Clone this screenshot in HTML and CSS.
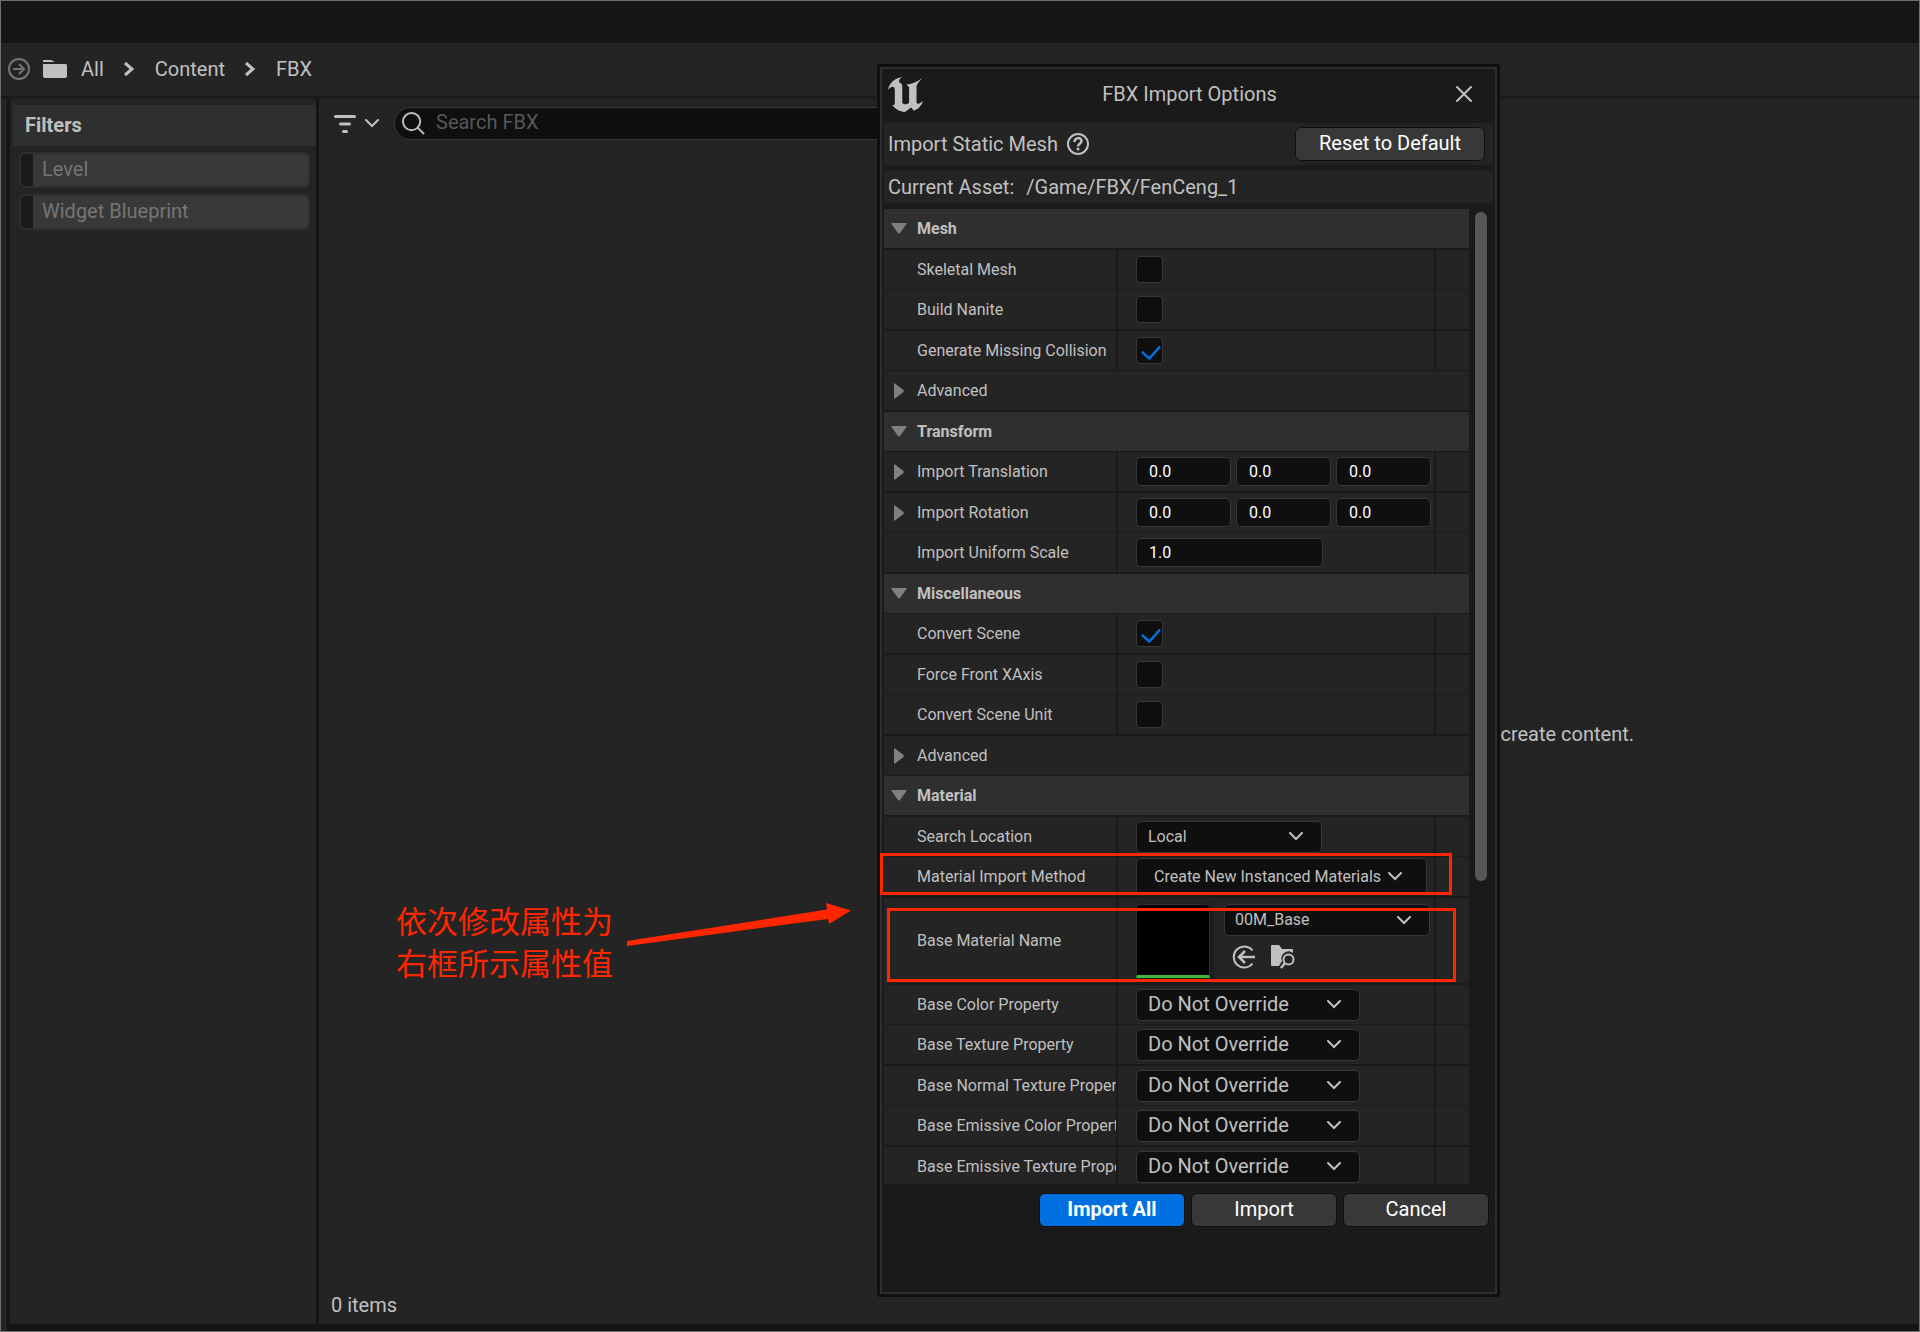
FILE: index.html
```html
<!DOCTYPE html>
<html lang="en">
<head>
    <meta charset="UTF-8">
    <meta name="viewport" content="width=device-width, initial-scale=1.0">
    <title>FBX Import Options</title>
    <link rel="stylesheet" href="styles.css">
</head>
<body>
    <svg class="symbols" aria-hidden="true">
        <symbol id="chevron" viewBox="0 0 14 9"><path d="M1 1l6 6 6-6" fill="none" stroke="currentColor" stroke-width="2" stroke-linecap="round"/></symbol>
        <symbol id="crumb" viewBox="0 0 10 16"><path d="M1 2l7 6-7 6" fill="none" stroke="currentColor" stroke-width="3"/></symbol>
        <symbol id="open" viewBox="0 0 16 11"><path d="M1 0h14q1 0 .5 1L9 10q-1 1-2 0L.5 1Q0 0 1 0z" fill="currentColor"/></symbol>
        <symbol id="closed" viewBox="0 0 10 16"><path d="M0 1q0-1 1-.5L9.500 7q.5 1 0 2L1 15.500Q0 16 0 15z" fill="currentColor"/></symbol>
    </svg>

    <div class="window">
        <div class="titlebar"></div>
        <nav class="breadcrumbs">
            <svg class="icon-forward" viewBox="0 0 22 22"><g fill="none" stroke="currentColor" stroke-width="2"><circle cx="11" cy="11" r="10"/><path d="M5 11h11M11 6l5 5-5 5"/></g></svg>
            <svg class="icon-folder" viewBox="0 0 24 18"><path d="M0 0h8l4 2H0zM0 4h23l1 1v11q0 2-2 2H2q-2 0-2-2z" fill="currentColor"/></svg>
            <a href="#">All</a>
            <svg class="icon-crumb"><use href="#crumb"/></svg>
            <a href="#">Content</a>
            <svg class="icon-crumb"><use href="#crumb"/></svg>
            <a href="#">FBX</a>
        </nav>

        <div class="browser">
            <aside class="filters">
                <h2>Filters</h2>
                <button class="filter">Level</button>
                <button class="filter">Widget Blueprint</button>
            </aside>
            <main class="assets">
                <div class="toolbar">
                    <button class="filter-menu" aria-label="Filter menu">
                        <svg class="icon-filter" viewBox="0 0 22 18"><path d="M1.500 1.500h19M6.500 9h9M9.500 16.500h3" stroke="currentColor" stroke-width="3" stroke-linecap="round"/></svg>
                        <svg class="icon-chevron"><use href="#chevron"/></svg>
                    </button>
                    <label class="search">
                        <svg class="icon-search" viewBox="0 0 24 24"><g fill="none" stroke="currentColor" stroke-width="2"><circle cx="10" cy="10" r="9"/><path d="M16 16l7 7"/></g></svg>
                        <input type="text" placeholder="Search FBX" aria-label="Search FBX">
                    </label>
                </div>
                <p class="hint">create content.</p>
                <p class="count">0 items</p>
            </main>
        </div>
    </div>

    <div class="dialog" role="dialog" aria-labelledby="dialogTitle">
        <header class="dialog-header">
            <svg class="logo" viewBox="0 0 103 103"><path fill="currentColor" d="M0 38C4 16 20 4 41 0C32 8 30 12 36 18C40 20 42 22 42 27V76C46 82 55 82 62 76V30L54 22C68 22 84 16 100 4C90 16 84 22 84 30V74C86 82 92 80 103 70C98 87 88 95 76 99L68 90L50 103C34 103 20 94 12 82C18 84 20 82 20 76V38C20 26 10 26 0 38Z"/></svg>
            <h1 id="dialogTitle">FBX Import Options</h1>
            <button class="close" aria-label="Close">
                <svg viewBox="0 0 16 16"><path d="M1 1l14 14M15 1L1 15" stroke="currentColor" stroke-width="2" stroke-linecap="round"/></svg>
            </button>
        </header>

        <div class="band band-type">
            <span>Import Static Mesh</span>
            <svg class="icon-help" viewBox="0 0 22 22"><g fill="none" stroke="currentColor" stroke-width="2"><circle cx="11" cy="11" r="10"/><path stroke-width="2.500" d="M7.500 9c0-5 7-5 7-1 0 3-3.500 2.500-3.500 5.500"/></g><circle cx="11" cy="16" r="1.500" fill="currentColor"/></svg>
            <button class="button button-reset">Reset to Default</button>
        </div>
        <div class="band band-asset">
            <span>Current Asset:</span>
            <span>/Game/FBX/FenCeng_1</span>
        </div>

        <div class="details">
            <div class="properties">
                <button class="group"><svg class="tri-open"><use href="#open"/></svg>Mesh</button>
                <div class="row">
                    <label for="skeletal">Skeletal Mesh</label>
                    <div class="value"><input type="checkbox" id="skeletal"></div>
                    <div class="reset"></div>
                </div>
                <div class="row">
                    <label for="nanite">Build Nanite</label>
                    <div class="value"><input type="checkbox" id="nanite"></div>
                    <div class="reset"></div>
                </div>
                <div class="row">
                    <label for="collision">Generate Missing Collision</label>
                    <div class="value"><input type="checkbox" id="collision" checked></div>
                    <div class="reset"></div>
                </div>
                <button class="group group-advanced"><svg class="tri-closed"><use href="#closed"/></svg>Advanced</button>

                <button class="group"><svg class="tri-open"><use href="#open"/></svg>Transform</button>
                <div class="row">
                    <label for="translation"><svg class="tri-closed"><use href="#closed"/></svg>Import Translation</label>
                    <div class="value">
                        <input type="text" class="number" id="translation" value="0.0">
                        <input type="text" class="number" aria-label="Import Translation Y" value="0.0">
                        <input type="text" class="number" aria-label="Import Translation Z" value="0.0">
                    </div>
                    <div class="reset"></div>
                </div>
                <div class="row">
                    <label for="rotation"><svg class="tri-closed"><use href="#closed"/></svg>Import Rotation</label>
                    <div class="value">
                        <input type="text" class="number" id="rotation" value="0.0">
                        <input type="text" class="number" aria-label="Import Rotation Y" value="0.0">
                        <input type="text" class="number" aria-label="Import Rotation Z" value="0.0">
                    </div>
                    <div class="reset"></div>
                </div>
                <div class="row">
                    <label for="scale">Import Uniform Scale</label>
                    <div class="value"><input type="text" class="number number-wide" id="scale" value="1.0"></div>
                    <div class="reset"></div>
                </div>

                <button class="group"><svg class="tri-open"><use href="#open"/></svg>Miscellaneous</button>
                <div class="row">
                    <label for="convert">Convert Scene</label>
                    <div class="value"><input type="checkbox" id="convert" checked></div>
                    <div class="reset"></div>
                </div>
                <div class="row">
                    <label for="xaxis">Force Front XAxis</label>
                    <div class="value"><input type="checkbox" id="xaxis"></div>
                    <div class="reset"></div>
                </div>
                <div class="row">
                    <label for="unit">Convert Scene Unit</label>
                    <div class="value"><input type="checkbox" id="unit"></div>
                    <div class="reset"></div>
                </div>
                <button class="group group-advanced"><svg class="tri-closed"><use href="#closed"/></svg>Advanced</button>

                <button class="group"><svg class="tri-open"><use href="#open"/></svg>Material</button>
                <div class="row">
                    <label for="location">Search Location</label>
                    <div class="value">
                        <div class="select select-location">
                            <select id="location"><option>Local</option></select>
                            <svg class="icon-chevron"><use href="#chevron"/></svg>
                        </div>
                    </div>
                    <div class="reset"></div>
                </div>
                <div class="row">
                    <label for="method">Material Import Method</label>
                    <div class="value">
                        <div class="select select-method">
                            <select id="method"><option>Create New Instanced Materials</option></select>
                            <svg class="icon-chevron"><use href="#chevron"/></svg>
                        </div>
                    </div>
                    <div class="reset"></div>
                </div>
                <div class="row row-material">
                    <label for="material">Base Material Name</label>
                    <div class="value">
                        <div class="thumbnail"></div>
                        <div class="asset">
                            <div class="select select-asset">
                                <select id="material"><option>00M_Base</option></select>
                                <svg class="icon-chevron"><use href="#chevron"/></svg>
                            </div>
                            <div class="asset-actions">
                                <button aria-label="Use selected asset">
                                    <svg viewBox="0 0 24 24"><g fill="none" stroke="currentColor" stroke-width="2"><path d="M20.500 5.500a10.500 10.500 0 1 0 0 13"/><path stroke-width="2.500" d="M23 12H7M13 6l-6 6 6 6"/></g></svg>
                                </button>
                                <button aria-label="Browse to asset">
                                    <svg viewBox="0 0 24 24"><path fill="currentColor" d="M0 1q0-1 1-1h7l3 4h10q1 0 1 1v3a7 7 0 0 0-11 8l-3 5H1q-1 0-1-1z"/><g fill="none" stroke="currentColor" stroke-width="2"><circle cx="17.500" cy="14.500" r="5"/><path stroke-width="2.500" d="M14 18l-4 5"/></g></svg>
                                </button>
                            </div>
                        </div>
                    </div>
                    <div class="reset"></div>
                </div>
                <div class="row">
                    <label for="baseColor">Base Color Property</label>
                    <div class="value">
                        <div class="select select-override">
                            <select id="baseColor"><option>Do Not Override</option></select>
                            <svg class="icon-chevron"><use href="#chevron"/></svg>
                        </div>
                    </div>
                    <div class="reset"></div>
                </div>
                <div class="row">
                    <label for="baseTexture">Base Texture Property</label>
                    <div class="value">
                        <div class="select select-override">
                            <select id="baseTexture"><option>Do Not Override</option></select>
                            <svg class="icon-chevron"><use href="#chevron"/></svg>
                        </div>
                    </div>
                    <div class="reset"></div>
                </div>
                <div class="row">
                    <label for="baseNormal">Base Normal Texture Property</label>
                    <div class="value">
                        <div class="select select-override">
                            <select id="baseNormal"><option>Do Not Override</option></select>
                            <svg class="icon-chevron"><use href="#chevron"/></svg>
                        </div>
                    </div>
                    <div class="reset"></div>
                </div>
                <div class="row">
                    <label for="emissiveColor">Base Emissive Color Property</label>
                    <div class="value">
                        <div class="select select-override">
                            <select id="emissiveColor"><option>Do Not Override</option></select>
                            <svg class="icon-chevron"><use href="#chevron"/></svg>
                        </div>
                    </div>
                    <div class="reset"></div>
                </div>
                <div class="row">
                    <label for="emissiveTexture">Base Emissive Texture Property</label>
                    <div class="value">
                        <div class="select select-override">
                            <select id="emissiveTexture"><option>Do Not Override</option></select>
                            <svg class="icon-chevron"><use href="#chevron"/></svg>
                        </div>
                    </div>
                    <div class="reset"></div>
                </div>
            </div>
            <div class="scrollbar"><div class="thumb"></div></div>
        </div>

        <footer class="dialog-footer">
            <button class="button button-primary">Import All</button>
            <button class="button">Import</button>
            <button class="button">Cancel</button>
        </footer>

        <div class="mark mark-method"></div>
        <div class="mark mark-material"></div>
    </div>

    <div class="note" lang="zh-CN">
        <p>依次修改属性为<br>右框所示属性值</p>
        <svg class="arrow" viewBox="0 0 224 44"><path d="M0 38L200 6.500L199 0L224 7.500L202 21L201 16L0 43z" fill="currentColor"/></svg>
    </div>
</body>
</html>
```
FILE: styles.css
```css
* {
    box-sizing: border-box;
}
body {
    margin: 0;
    background-color: #242424;
    color: #c0c0c0;
    font-family: Roboto, "Noto Sans CJK SC", sans-serif;
    font-size: 20px;
    line-height: 24px;
}
h1, h2, p {
    margin: 0;
    font-size: 20px;
}
button, input, select {
    font: inherit;
    color: inherit;
    border: none;
    margin: 0;
    padding: 0;
    background: none;
}
a {
    color: inherit;
    text-decoration: none;
}
svg {
    display: block;
    flex-shrink: 0;
}
.symbols {
    position: absolute;
    width: 0;
    height: 0;
}

/* content browser */
.window {
    display: flex;
    flex-direction: column;
    min-height: 100vh;
    border: 1px solid #6e6e6e;
}
.titlebar {
    height: 42px;
    background-color: #151515;
}
.breadcrumbs {
    display: flex;
    align-items: center;
    height: 56px;
    padding: 0 7px 2px;
    border-bottom: 3px solid #1a1a1a;
}
.icon-forward {
    width: 22px;
    height: 22px;
    margin-right: 13px;
    color: #757575;
}
.icon-folder {
    width: 24px;
    height: 18px;
    margin-right: 14px;
}
.icon-crumb {
    width: 10px;
    height: 16px;
    margin: 0 21px 0 20px;
}
.browser {
    flex: 1;
    display: flex;
    margin-left: 6px;
    border-left: 3px solid #151515;
    border-bottom: 7px solid #151515;
}
.filters {
    width: 309px;
    padding: 6px 0 0 3px;
    border-right: 3px solid #151515;
}
.filters h2 {
    height: 41px;
    padding-left: 12px;
    line-height: 40px;
    background-color: #2f2f2f;
}
.filter {
    display: block;
    width: 291px;
    height: 36px;
    margin: 6px;
    padding: 0 0 3px 21px;
    border: 2px solid #2f2f2f;
    border-radius: 6px;
    background: linear-gradient(to right, #1a1a1a 12px, #383838 12px) padding-box;
    color: #757575;
    text-align: left;
}
.assets {
    flex: 1;
    display: flex;
    flex-direction: column;
}
.toolbar {
    display: flex;
    align-items: center;
    padding: 8px 15px;
}
.filter-menu {
    display: flex;
    align-items: center;
    gap: 9px;
    margin-right: 15px;
}
.icon-filter {
    width: 22px;
    height: 18px;
}
.icon-chevron {
    width: 14px;
    height: 9px;
}
.search {
    display: flex;
    width: 60%;
    height: 33px;
    padding-left: 7px;
    border: 1px solid #383838;
    border-radius: 16px;
    background-color: #0f0f0f;
}
.icon-search {
    width: 23px;
    height: 23px;
    margin: 4px 11px 0 0;
}
.search input {
    flex: 1;
    height: 27px;
    outline: none;
}
.search input::placeholder {
    color: #575757;
    opacity: 1;
}
.hint {
    margin: auto 18% auto 0;
    padding: 26px 0 0;
    text-align: right;
    align-self: flex-end;
    margin-right: calc(18% - 3px);
}
.count {
    padding: 0 12px 7px;
}

/* import dialog */
.dialog {
    position: absolute;
    top: 64px;
    left: 877px;
    display: flex;
    flex-direction: column;
    width: 623px;
    height: calc(100vh - 99px);
    padding: 0 3px;
    border: 3px solid #0f0f0f;
    border-radius: 3px;
    box-shadow: inset 0 0 0 2px #2f2f2f;
    background-color: #1a1a1a;
}
.dialog-header {
    display: flex;
    align-items: center;
    justify-content: space-between;
    height: 56px;
    padding: 0 22px 2px 5px;
}
.dialog-header h1 {
    font-weight: 400;
}
.logo {
    width: 35px;
    height: 35px;
}
.close svg {
    width: 16px;
    height: 16px;
}
.band {
    display: flex;
    align-items: center;
    margin: 0 1px 6px;
    padding: 0 8px 0 4px;
    background-color: #242424;
}
.band-type {
    gap: 9px;
    height: 42px;
}
.band-asset {
    gap: 12px;
    height: 32px;
}
.icon-help {
    width: 22px;
    height: 22px;
}
.button {
    width: 146px;
    height: 34px;
    padding-bottom: 2px;
    border: 1px solid #0f0f0f;
    border-radius: 6px;
    background-color: #383838;
    color: #fff;
}
.button-primary {
    background-color: #0070e0;
    font-weight: 700;
}
.button-reset {
    width: 190px;
    margin-left: auto;
}
.details {
    flex: 1;
    display: flex;
    min-height: 0;
    margin-left: 1px;
}
.properties {
    flex: 1;
    overflow: hidden;
    font-size: 16px;
}
.scrollbar {
    width: 25px;
    padding: 3px 7px 3px 6px;
}
.thumb {
    height: 69%;
    border-radius: 6px;
    background-color: #575757;
}
.group {
    display: flex;
    align-items: center;
    width: 100%;
    height: 39px;
    margin-bottom: 1px;
    padding-left: 33px;
    background-color: #2f2f2f;
    font-weight: 700;
}
.group-advanced {
    background-color: #242424;
    font-weight: 400;
}
.tri-open, .tri-closed {
    color: #808080;
}
.tri-open {
    width: 16px;
    height: 11px;
    margin: 0 10px 0 -26px;
}
.tri-closed {
    width: 10px;
    height: 16px;
    margin: 0 13px 0 -23px;
}
.row {
    display: grid;
    grid-template-columns: 232px 1fr 33px;
    column-gap: 2px;
    height: 39px;
    margin-bottom: 1px;
}
.group:nth-child(odd), .row:nth-child(odd) {
    margin-bottom: 2px;
}
.row label, .value, .reset {
    display: flex;
    align-items: center;
    background-color: #242424;
}
.row label {
    padding-left: 33px;
    overflow: hidden;
    white-space: nowrap;
}
.value {
    gap: 5px;
    padding-left: 18px;
}
.row-material {
    height: 85px;
    margin-bottom: 2px;
}
.row-material ~ .row:nth-child(odd) {
    margin-bottom: 1px;
}
.row-material ~ .row:nth-child(even) {
    margin-bottom: 2px;
}
input[type="checkbox"] {
    appearance: none;
    width: 27px;
    height: 27px;
    border: 1px solid #383838;
    border-radius: 4px;
    background-color: #0f0f0f;
}
input[type="checkbox"]:checked::before {
    content: "";
    display: block;
    width: 9px;
    height: 15px;
    margin: 3px 0 0 8px;
    border: solid #0070e0;
    border-width: 0 3px 3px 0;
    border-radius: 2px;
    transform: rotate(42deg);
}
.number {
    width: 95px;
    height: 29px;
    padding-left: 12px;
    border: 1px solid #383838;
    border-radius: 5px;
    background-color: #0f0f0f;
    color: #fff;
}
.number-wide {
    width: 187px;
}
.select {
    display: grid;
    align-items: center;
    height: 32px;
    border: 1px solid #383838;
    border-radius: 5px;
    background-color: #0f0f0f;
}
.select select {
    grid-area: 1 / 1;
    height: 30px;
    padding: 0 11px;
    appearance: none;
}
.select option {
    background-color: #0f0f0f;
}
.select .icon-chevron {
    grid-area: 1 / 1;
    justify-self: end;
    margin-right: 18px;
    pointer-events: none;
}
.select-location {
    width: 186px;
}
.select-method {
    width: 291px;
    height: 37px;
}
.select-method select {
    padding-left: 17px;
}
.select-method .icon-chevron {
    margin-right: 24px;
}
.select-asset {
    width: 206px;
}
.select-asset select {
    padding-left: 10px;
}
.select-override {
    width: 224px;
    font-size: 20px;
}
.select-override select {
    padding-bottom: 2px;
}
.thumbnail {
    width: 74px;
    height: 74px;
    margin-right: 9px;
    border: 1px solid #2f2f2f;
    border-bottom: 3px solid #3fb93f;
    border-radius: 4px 4px 0 0;
    background-color: #000;
    box-shadow: 3px 2px 4px #1a1a1a;
}
.asset {
    padding-bottom: 8px;
}
.asset-actions {
    display: flex;
    gap: 15px;
    padding: 9px 8px 0;
}
.asset-actions svg {
    width: 24px;
    height: 24px;
}
.dialog-footer {
    display: flex;
    justify-content: flex-end;
    gap: 6px;
    padding: 9px 5px 67px;
}

/* tutorial annotations */
.mark {
    position: absolute;
    border: 3px solid #ff2600;
    pointer-events: none;
}
.mark-method {
    top: 786px;
    left: 0;
    width: 572px;
    height: 42px;
}
.mark-material {
    top: 841px;
    left: 7px;
    width: 569px;
    height: 74px;
}
.note {
    position: absolute;
    top: 899px;
    left: 396px;
    display: flex;
    gap: 14px;
    color: #ff2600;
    font-family: "Noto Sans CJK SC", sans-serif;
    font-size: 31px;
    font-weight: 400;
    line-height: 42px;
}
.note p {
    font-size: 31px;
}
.arrow {
    width: 224px;
    height: 44px;
    margin-top: 4px;
}
```
